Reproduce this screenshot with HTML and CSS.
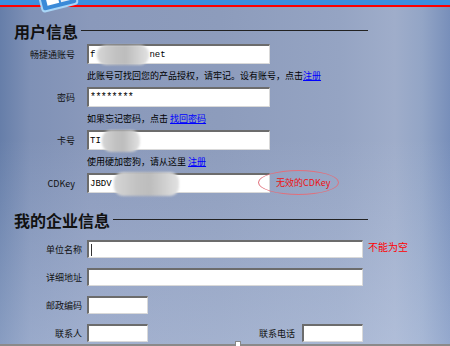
FILE: index.html
```html
<!DOCTYPE html>
<html lang="zh">
<head>
<meta charset="utf-8">
<title>用户信息</title>
<link rel="stylesheet" href="styles.css">
</head>
<body>
<div class="topbar">
  <svg class="logo" width="45" height="14" viewBox="0 0 45 14">
    <g transform="rotate(-14 22 -6)">
      <rect x="4" y="-24" width="36" height="32" rx="3" fill="#3a8ad8" stroke="#a9d6f7" stroke-width="2"/>
      <rect x="10" y="-19" width="12" height="22" fill="#ffffff"/>
      <rect x="24" y="-19" width="12" height="22" fill="#e6edf6"/>
    </g>
  </svg>
</div>
<main class="page">
  <section class="sec">
    <h2 class="sec-title first">用户信息</h2>
    <div class="row row-first">
      <span class="label">畅捷通账号</span>
      <div class="field w-md">f<span class="blob b1"></span>net</div>
    </div>
    <div class="hint">此账号可找回您的产品授权，请牢记。设有账号，点击<a href="#">注册</a></div>
    <div class="row">
      <span class="label">密码</span>
      <div class="field w-md pw">********</div>
    </div>
    <div class="hint">如果忘记密码，点击 <a href="#">找回密码</a></div>
    <div class="row">
      <span class="label">卡号</span>
      <div class="field w-md">TI<span class="blob b3"></span></div>
    </div>
    <div class="hint">使用硬加密狗，请从这里 <a href="#">注册</a></div>
    <div class="row">
      <span class="label">CDKey</span>
      <div class="field w-md">JBDV<span class="blob b4"></span></div>
      <span class="bubble">无效的CDKey</span>
    </div>
  </section>
  <section class="sec">
    <h2 class="sec-title second">我的企业信息</h2>
    <div class="row row-s2 row-s2-first">
      <span class="label label-s2">单位名称</span>
      <div class="field field-s2 w-lg"><span class="caret"></span></div>
      <span class="err">不能为空</span>
    </div>
    <div class="row row-s2">
      <span class="label label-s2">详细地址</span>
      <div class="field field-s2 w-lg"></div>
    </div>
    <div class="row row-s2">
      <span class="label label-s2">邮政编码</span>
      <div class="field field-s2 w-sm"></div>
    </div>
    <div class="row row-s2">
      <span class="label label-s2">联系人</span>
      <div class="field field-s2 w-sm"></div>
      <span class="label label-phone">联系电话</span>
      <div class="field field-s2 w-sm"></div>
    </div>
  </section>
</main>
<div class="hscroll"><span class="knob"></span></div>
</body>
</html>
```
FILE: styles.css
```css
html, body {
  margin: 0;
  padding: 0;
  height: 346px;
  overflow: hidden;
}

body {
  font-family: "Noto Sans CJK SC", "Noto Sans", sans-serif;
  font-size: 9px;
  color: #000;
  background:
    linear-gradient(to bottom, rgba(255,255,255,0) 40%, rgba(215,228,250,0.3) 100%),
    linear-gradient(to right, #667ea9 0, #7f91b6 30px, #8a99bb 90px, #8d9cbc 220px, #95a4c3 340px, #9fadca 395px, #93a5c6 422px, #788fba 450px);
}

.topbar {
  position: relative;
  height: 5px;
  background: #3b8fdf;
  border-bottom: 2px solid #ff0000;
}

.logo {
  position: absolute;
  left: 35px;
  top: 0;
}

.sec-title {
  display: flex;
  align-items: center;
  box-sizing: border-box;
  width: 354px;
  height: 20px;
  margin: 0 0 0 14px;
  font-size: 16px;
  line-height: 20px;
  font-weight: bold;
  color: #111;
}

.sec-title::after {
  content: "";
  flex: 1;
  border-top: 1px solid #222;
  margin: -1px 0 0 3px;
}

.sec-title.first {
  margin-top: 14px;
}

.sec-title.second {
  margin-top: 17px;
}

.row {
  position: relative;
  display: flex;
  align-items: center;
  height: 20px;
}

.row-first {
  margin-top: 3px;
}

.label {
  flex: none;
  width: 75px;
  margin-right: 12px;
  text-align: right;
  color: #111;
}

.field {
  flex: none;
  box-sizing: border-box;
  display: flex;
  align-items: center;
  height: 20px;
  padding-left: 1px;
  background: #fff;
  border-top: 2px solid #6c6c6c;
  border-left: 2px solid #6c6c6c;
  border-right: 1px solid #d9d9d9;
  border-bottom: 1px solid #d9d9d9;
  font-family: "Liberation Mono", "DejaVu Sans Mono", monospace;
  font-size: 9px;
  color: #000;
  white-space: nowrap;
}

.w-md { width: 183px; }
.w-lg { width: 276px; }
.w-sm { width: 61px; }

.pw {
  font-size: 10px;
  letter-spacing: -0.6px;
}

.blob {
  flex: none;
  display: inline-block;
  border-radius: 9px;
  filter: blur(1.2px);
  background: linear-gradient(to right, #d6d6d6 0, #c2c2c2 35%, #bdbdbd 55%, #cdcdcd 75%, #e2e2e2 100%);
}

.b1 { width: 52px; height: 20px; margin: 0 0 0 2px; }
.b3 { width: 38px; height: 22px; margin-left: 1px; }
.b4 { width: 65px; height: 24px; margin-left: 2px; }

.hint {
  height: 23px;
  line-height: 23px;
  padding-left: 87px;
  color: #000;
}

.hint a {
  color: #0000ff;
  text-decoration: underline;
}

.bubble {
  position: absolute;
  left: 258px;
  top: -3px;
  box-sizing: border-box;
  width: 81px;
  height: 25px;
  padding-left: 17px;
  line-height: 23px;
  border: 1px solid #e0707c;
  border-radius: 50%;
  color: #ee1111;
  font-size: 9px;
}

.row-s2 {
  height: 18px;
  margin-top: 10px;
}

.label-s2 {
  width: 82px;
  margin-right: 5px;
}

.label-phone {
  width: 147px;
  margin-right: 7px;
}

.field-s2 {
  height: 18px;
}

.caret {
  display: inline-block;
  width: 1px;
  height: 12px;
  margin-left: 1px;
  background: #333;
}

.err {
  margin: 0 0 6px 5px;
  color: #ff0000;
  font-size: 10px;
}

.hscroll {
  position: relative;
  margin-top: 2px;
  height: 2px;
  background: #8a8a8a;
}

.knob {
  position: absolute;
  left: 235px;
  top: -3px;
  box-sizing: border-box;
  width: 6px;
  height: 6px;
  background: #fff;
  border: 1px solid #888;
}
```
